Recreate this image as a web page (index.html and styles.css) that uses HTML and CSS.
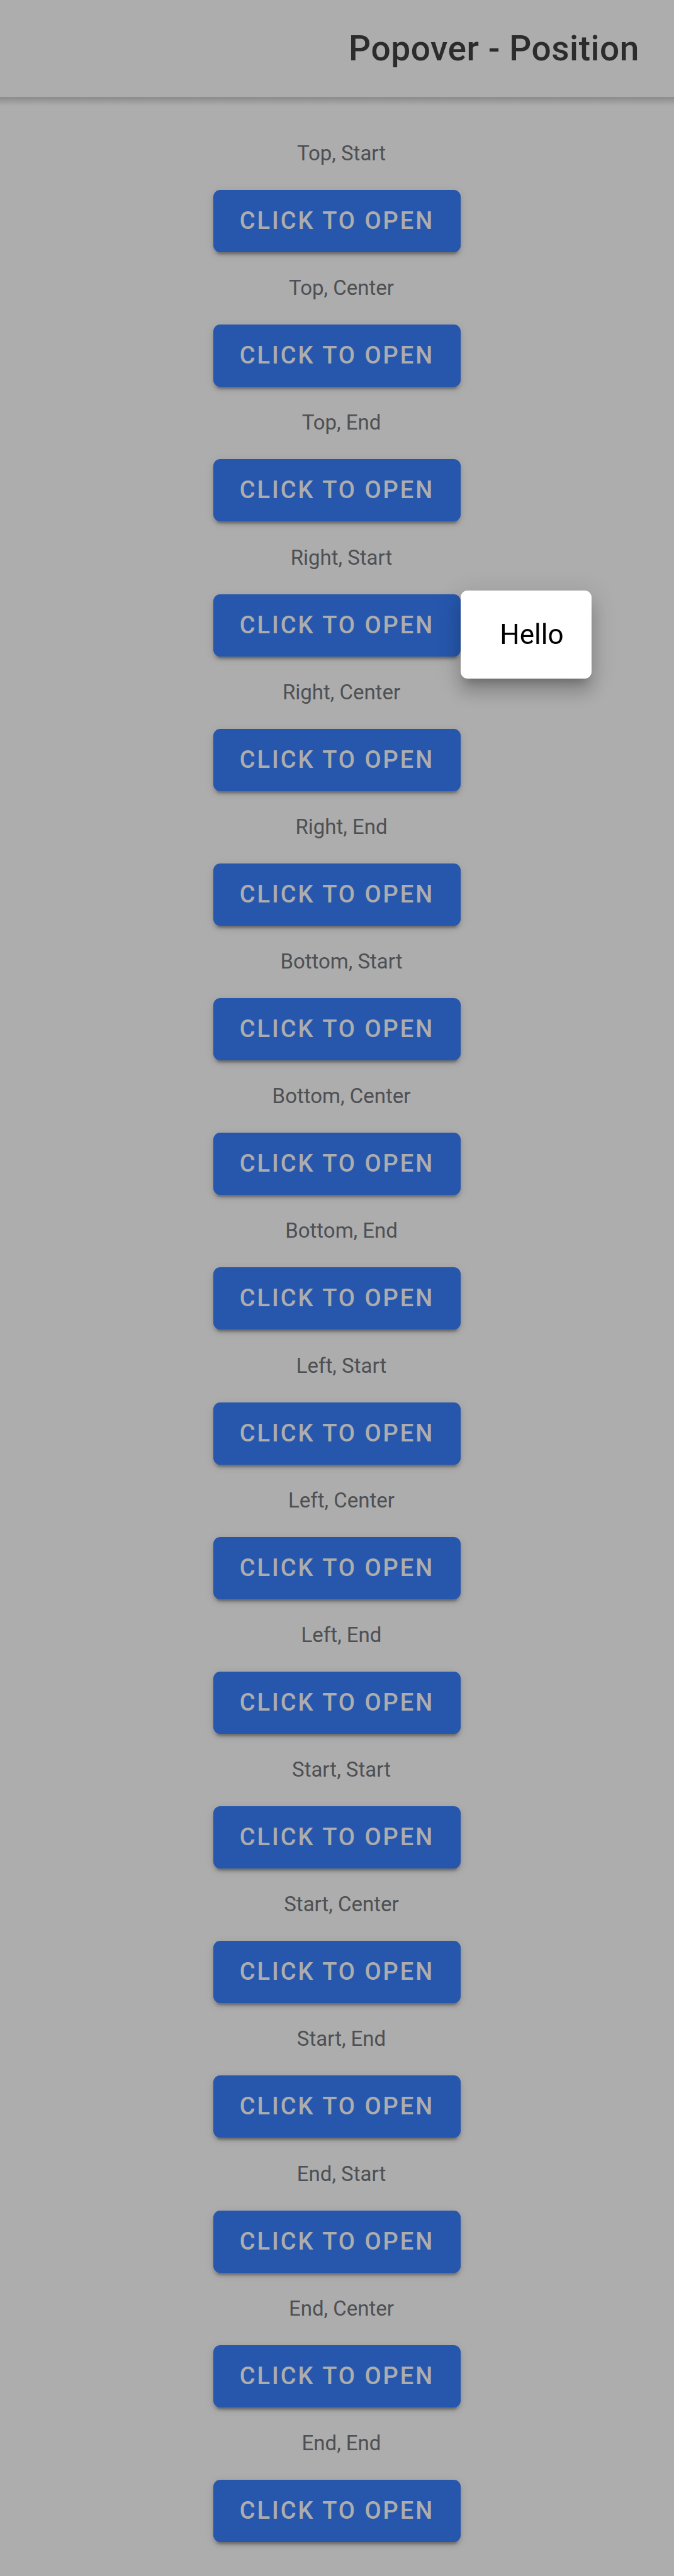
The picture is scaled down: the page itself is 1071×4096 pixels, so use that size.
FILE: index.html
```html
<!DOCTYPE html>
<html lang="en">
<head>
<meta charset="utf-8">
<meta name="viewport" content="width=device-width, initial-scale=1">
<title>Popover - Position</title>
<link rel="stylesheet" href="styles.css">
</head>
<body>
<header class="toolbar"><h1 class="title">Popover - Position</h1></header>
<main class="content">
<section class="item"><p class="label" id="l1">Top, Start</p><div class="anchor"><button class="button" type="button" aria-describedby="l1">Click to Open</button></div></section>
<section class="item"><p class="label" id="l2">Top, Center</p><div class="anchor"><button class="button" type="button" aria-describedby="l2">Click to Open</button></div></section>
<section class="item"><p class="label" id="l3">Top, End</p><div class="anchor"><button class="button" type="button" aria-describedby="l3">Click to Open</button></div></section>
<section class="item"><p class="label" id="l4">Right, Start</p><div class="anchor"><button class="button" type="button" aria-describedby="l4" aria-expanded="true">Click to Open</button><div class="popover" role="dialog" aria-label="Greeting">Hello</div></div></section>
<section class="item"><p class="label" id="l5">Right, Center</p><div class="anchor"><button class="button" type="button" aria-describedby="l5">Click to Open</button></div></section>
<section class="item"><p class="label" id="l6">Right, End</p><div class="anchor"><button class="button" type="button" aria-describedby="l6">Click to Open</button></div></section>
<section class="item"><p class="label" id="l7">Bottom, Start</p><div class="anchor"><button class="button" type="button" aria-describedby="l7">Click to Open</button></div></section>
<section class="item"><p class="label" id="l8">Bottom, Center</p><div class="anchor"><button class="button" type="button" aria-describedby="l8">Click to Open</button></div></section>
<section class="item"><p class="label" id="l9">Bottom, End</p><div class="anchor"><button class="button" type="button" aria-describedby="l9">Click to Open</button></div></section>
<section class="item"><p class="label" id="l10">Left, Start</p><div class="anchor"><button class="button" type="button" aria-describedby="l10">Click to Open</button></div></section>
<section class="item"><p class="label" id="l11">Left, Center</p><div class="anchor"><button class="button" type="button" aria-describedby="l11">Click to Open</button></div></section>
<section class="item"><p class="label" id="l12">Left, End</p><div class="anchor"><button class="button" type="button" aria-describedby="l12">Click to Open</button></div></section>
<section class="item"><p class="label" id="l13">Start, Start</p><div class="anchor"><button class="button" type="button" aria-describedby="l13">Click to Open</button></div></section>
<section class="item"><p class="label" id="l14">Start, Center</p><div class="anchor"><button class="button" type="button" aria-describedby="l14">Click to Open</button></div></section>
<section class="item"><p class="label" id="l15">Start, End</p><div class="anchor"><button class="button" type="button" aria-describedby="l15">Click to Open</button></div></section>
<section class="item"><p class="label" id="l16">End, Start</p><div class="anchor"><button class="button" type="button" aria-describedby="l16">Click to Open</button></div></section>
<section class="item"><p class="label" id="l17">End, Center</p><div class="anchor"><button class="button" type="button" aria-describedby="l17">Click to Open</button></div></section>
<section class="item"><p class="label" id="l18">End, End</p><div class="anchor"><button class="button" type="button" aria-describedby="l18">Click to Open</button></div></section>
</main>
<div class="backdrop"></div>
</body>
</html>
```
FILE: styles.css
```css
* { box-sizing: border-box; }

body {
  margin: 0;
  min-height: 100vh;
  display: flex;
  flex-direction: column;
  background: #fff;
  font-family: Roboto, "Liberation Sans", sans-serif;
}

.toolbar {
  padding: 44px 55px;
  text-align: right;
}

.title {
  margin: 0;
  font-size: 55px;
  line-height: 66px;
  font-weight: 500;
  letter-spacing: 0.01em;
  color: #424242;
}

.content {
  flex: 1;
  display: flex;
  flex-direction: column;
  justify-content: space-between;
  gap: 36px;
  padding: 70px 0 54px;
  background: linear-gradient(rgba(0, 0, 0, 0.2), rgba(0, 0, 0, 0)) top / 100% 14px no-repeat;
}

.item {
  display: flex;
  flex-direction: column;
  align-items: center;
  gap: 38px;
}

.label {
  margin: 0;
  padding-left: 14px;
  font-size: 33px;
  line-height: 40px;
  color: #73767b;
}

.anchor { position: relative; }

.button {
  display: block;
  border: 0;
  border-radius: 11px;
  padding: 0 42px;
  background: #3880ff;
  color: #fff;
  font: 500 38px/99px Roboto, "Liberation Sans", sans-serif;
  letter-spacing: 3px;
  text-transform: uppercase;
  white-space: nowrap;
  box-shadow: 0 8px 3px -5px rgba(0, 0, 0, 0.2), 0 5px 5px rgba(0, 0, 0, 0.14), 0 3px 14px rgba(0, 0, 0, 0.12);
}

/* Dims the page behind the open popover */
.backdrop {
  position: fixed;
  inset: 0;
  z-index: 10;
  background: rgba(0, 0, 0, 0.32);
}

.popover {
  position: absolute;
  z-index: 20;
  top: -6px;
  left: 100%;
  padding: 44px 44px 44px 62px;
  border-radius: 11px;
  background: #fff;
  color: #000;
  font-size: 44px;
  line-height: 52px;
  box-shadow: 0 14px 14px -8px rgba(0, 0, 0, 0.2), 0 22px 27px 3px rgba(0, 0, 0, 0.14), 0 8px 38px 5px rgba(0, 0, 0, 0.12);
}
```
